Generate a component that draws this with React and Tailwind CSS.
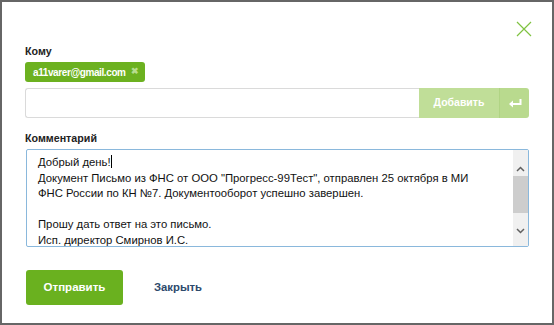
import React from "react";

const font = { fontFamily: "'Liberation Sans', Arial, sans-serif" };

const LINES = [
  "Добрый день!",
  "Документ Письмо из ФНС от ООО \"Прогресс-99Тест\", отправлен 25 октября в МИ",
  "ФНС России по КН №7. Документооборот успешно завершен.",
  "",
  "Прошу дать ответ на это письмо.",
  "Исп. директор Смирнов И.С.",
];

function CloseIcon() {
  return (
    <svg width="16" height="16" viewBox="0 0 16 16" fill="none">
      <path d="M1 1L15 15M15 1L1 15" stroke="#7fc241" strokeWidth="1.2" />
    </svg>
  );
}

function EnterIcon() {
  return (
    <svg width="14" height="10" viewBox="0 0 14 10" fill="none">
      <path d="M12.5 1V6H2.5" stroke="#fff" strokeWidth="2" />
      <path d="M1 6L5 2.5V9.5Z" fill="#fff" />
    </svg>
  );
}

function Scrollbar() {
  return (
    <div className="w-[15px] h-full bg-[#f0f0f0] flex flex-col items-center">
      <div className="h-[26px] w-full flex items-end justify-center pb-[4px]">
        <svg width="9" height="6" viewBox="0 0 9 6" fill="none">
          <path d="M1 5L4.5 1.5L8 5" stroke="#606060" strokeWidth="1.5" />
        </svg>
      </div>
      <div className="w-full h-[37px] bg-[#cdcdcd]" />
      <div className="flex-1" />
      <div className="h-[22px] w-full flex items-start justify-center pt-[4px]">
        <svg width="9" height="6" viewBox="0 0 9 6" fill="none">
          <path d="M1 1L4.5 4.5L8 1" stroke="#606060" strokeWidth="1.5" />
        </svg>
      </div>
    </div>
  );
}

export default function App() {
  return (
    <div style={font} className="w-[554px] h-[325px] border-2 border-[#666666] bg-white flex flex-col px-[23px] text-[#222]">
      <div className="flex justify-end pt-[19px] -mr-[3px] h-[35px]">
        <CloseIcon />
      </div>

      <div className="mt-[7px] text-[10.7px] leading-[14px] font-bold">Кому</div>

      <div className="mt-[4px] flex">
        <div className="h-[20px] rounded-[3px] bg-[#6cb120] text-white text-[10px] font-bold flex items-center pl-[8px] pr-[6px] gap-[5px]">
          <span className="tracking-[-0.4px]">a11varer@gmail.com</span>
          <span className="text-[#b8dd8f] text-[9px]">✖</span>
        </div>
      </div>

      <div className="mt-[6px] flex h-[30px]">
        <div className="flex-1 border border-[#dadada] border-r-0 rounded-l-[3px] bg-white" />
        <div className="w-[80px] bg-[#c0de98] flex items-center justify-center text-white text-[10.5px] font-bold">
          Добавить
        </div>
        <div className="w-[30px] bg-[#b9da8e] border-l border-[#b0d484] rounded-r-[3px] flex items-center justify-center">
          <EnterIcon />
        </div>
      </div>

      <div className="mt-[13px] text-[10.7px] leading-[14px] font-bold">Комментарий</div>

      <div className="mt-[4px] ml-[1px] h-[98px] border border-[#8ab8dc] rounded-[2px] flex overflow-hidden">
        <div className="flex-1 pl-[11px] pt-[5px] text-[11.3px] leading-[15.5px] text-[#111] overflow-hidden">
          {LINES.map((l, i) => (
            <div key={i} className="h-[15.5px] whitespace-nowrap">
              {l}
              {i === 0 && <span className="inline-block w-px h-[13px] bg-black align-[-2px]" />}
            </div>
          ))}
        </div>
        <Scrollbar />
      </div>

      <div className="mt-[23px] ml-[1px] flex items-center">
        <button className="w-[97px] h-[35px] rounded-[3px] bg-[#6ab11f] text-white text-[11.5px] font-bold">
          Отправить
        </button>
        <span className="ml-[31px] text-[11.3px] font-bold text-[#2d4a6c]">Закрыть</span>
      </div>
    </div>
  );
}
